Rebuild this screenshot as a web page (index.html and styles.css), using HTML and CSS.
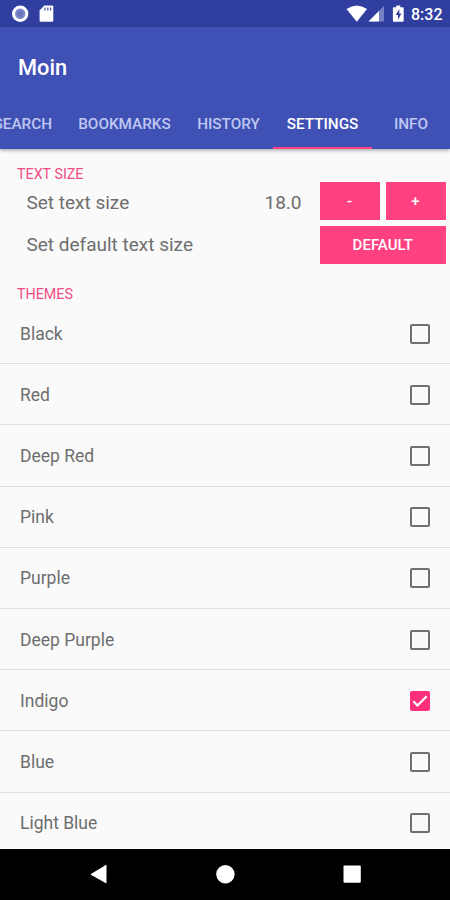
FILE: index.html
```html
<!DOCTYPE html>
<html lang="en">
<head>
<meta charset="utf-8">
<title>Moin</title>
<link rel="stylesheet" href="styles.css">
</head>
<body>
<div class="phone">
  <div class="status">
    <svg class="status-left" width="60" height="27" viewBox="0 0 60 27">
      <circle cx="20.2" cy="13.7" r="8.2" fill="#fff"/>
      <circle cx="20.2" cy="13.7" r="5.2" fill="#7d88c9"/>
      <circle cx="20.2" cy="13.7" r="3" fill="#6975bd"/>
      <path d="M44.3 5.5H52q1.3 0 1.3 1.3V20.400q0 1.400-1.300 1.400H41q-1.400 0-1.400-1.400V10.500z" fill="#fff"/>
      <path d="M44.900 7.500v3M47.800 7.500v3M50.600 7.500v3" stroke="#4c5aae" stroke-width="1.300"/>
    </svg>
    <svg class="status-right" width="62" height="27" viewBox="345 0 62 27">
      <path d="M346.500 9Q356.800 2 367 9L356.800 21.800z" fill="#fff"/>
      <path d="M384 6v15.500h-15.500z" fill="#7681c4"/>
      <path d="M379 11v10.500h-10.500z" fill="#fff"/>
      <path d="M396.300 5.500h4v1.700h2.400q1 0 1 1v12.600q0 1-1 1h-8.800q-1 0-1-1V8.200q0-1 1-1h2.400z" fill="#fff"/>
      <path d="M399.300 9l-3.600 6h2.300v4.700l3.400-6.200h-2.100z" fill="#303f9f"/>
    </svg>
    <span class="clock">8:32</span>
  </div>
  <header class="appbar">
    <h1 class="title">Moin</h1>
    <nav class="tabs">
      <div class="tab tab-search"><span>SEARCH</span></div>
      <div class="tab tab-bookmarks"><span>BOOKMARKS</span></div>
      <div class="tab tab-history"><span>HISTORY</span></div>
      <div class="tab tab-settings active"><span>SETTINGS</span></div>
      <div class="tab tab-info"><span>INFO</span></div>
    </nav>
  </header>
  <main class="content">
    <h2 class="section">TEXT SIZE</h2>
    <div class="setting">
      <span class="label">Set text size</span>
      <span class="value">18.0</span>
      <button class="btn small">-</button>
      <button class="btn small">+</button>
    </div>
    <div class="setting second">
      <span class="label">Set default text size</span>
      <button class="btn wide">DEFAULT</button>
    </div>
    <h2 class="section themes">THEMES</h2>
    <ul class="list">
      <li class="row"><span>Black</span><i class="box"></i></li>
      <li class="row"><span>Red</span><i class="box"></i></li>
      <li class="row"><span>Deep Red</span><i class="box"></i></li>
      <li class="row"><span>Pink</span><i class="box"></i></li>
      <li class="row"><span>Purple</span><i class="box"></i></li>
      <li class="row"><span>Deep Purple</span><i class="box"></i></li>
      <li class="row"><span>Indigo</span><i class="box checked"><svg width="20" height="20" viewBox="0 0 20 20"><path d="M3.300 10.300l4.200 4.200 9.200-9.200" fill="none" stroke="#fff" stroke-width="2.200"/></svg></i></li>
      <li class="row"><span>Blue</span><i class="box"></i></li>
      <li class="row"><span>Light Blue</span><i class="box"></i></li>
    </ul>
  </main>
  <footer class="navbar">
    <svg width="450" height="51" viewBox="0 849 450 51" fill="#fff">
      <path d="M106.500 865.500v17q0 1-1 .5L91.300 875q-1-.6 0-1.200l14.200-8.500q1-.5 1 .2z"/>
      <circle cx="225.400" cy="874.200" r="9.200"/>
      <rect x="343.500" y="865.500" width="17.300" height="17.300" rx="1"/>
    </svg>
  </footer>
</div>
</body>
</html>
```

FILE: styles.css
```css
* { box-sizing: border-box; }
body { margin: 0; font-family: Roboto, sans-serif; background: #fafafa; }
.phone { width: 450px; height: 900px; overflow: hidden; display: flex; flex-direction: column; }
.status { height: 27px; flex: none; display: flex; background: #303f9f; color: #fff; }
.status-right { margin-left: auto; }
.clock { width: 43px; padding-left: 4px; font-size: 16px; font-weight: 500; line-height: 29px; }
.appbar { height: 122px; flex: none; background: #3f51b5; box-shadow: 0 1px 4px rgba(0,0,0,.4); z-index: 1; }
.title { margin: 0; height: 73px; padding: 4px 0 0 18px; color: #fff; font-size: 21.800px; font-weight: 500; line-height: 73px; }
.tabs { display: flex; height: 49px; overflow: hidden; color: #bfc7f0; font-size: 15.300px; font-weight: 500; line-height: 49px; }
.tab { flex: none; display: flex; justify-content: center; white-space: nowrap; border-bottom: 2.500px solid transparent; }
.tab-search { width: 65px; justify-content: flex-end; padding-right: 13px; }
.tab-bookmarks { width: 119px; }
.tab-history { width: 89px; }
.tab-settings { width: 99px; }
.tab-info { width: 78px; }
.active { color: #fff; border-bottom-color: #ff4081; }
.content { flex: 1; min-height: 0; overflow: hidden; padding-top: 15px; background: #fafafa; color: #6e6e6e; }
.section { margin: 0; padding-left: 17px; height: 18px; color: #f04c86; font-size: 14.300px; font-weight: 400; line-height: 20px; }
.setting { display: flex; height: 38px; gap: 6px; padding: 0 4.500px 0 26.500px; margin-bottom: 6px; font-size: 19px; line-height: 41px; }
.label { flex: 1; }
.second .label { line-height: 37px; }
.value { margin-right: 12px; }
.btn { height: 38px; padding: 0; border: 0; background: #ff4081; color: #fff; font-family: inherit; font-size: 15px; font-weight: 500; line-height: 39px; }
.small { width: 60px; }
.wide { width: 125.500px; }
.themes { margin-top: 20px; margin-bottom: 1px; }
.list { list-style: none; margin: 0; padding: 0; }
.row { display: flex; align-items: center; justify-content: space-between; height: 61.200px; padding: 1px 20px 0; border-bottom: 1px solid #dedede; font-size: 17.500px; }
.box { width: 20px; height: 20px; border: 2px solid #707070; border-radius: 2px; }
.checked { border: 0; background: #ff2f7c; }
.checked svg { display: block; }
.navbar { height: 51px; flex: none; background: #000; }
.navbar svg { display: block; }
```
